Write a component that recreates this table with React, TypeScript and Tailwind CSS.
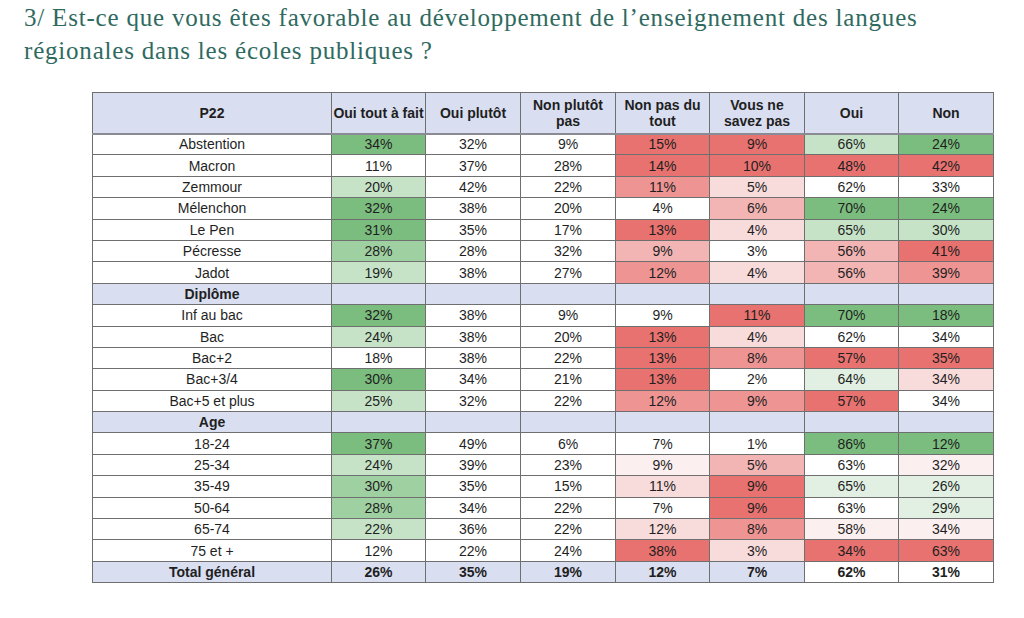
const shade: Record<string, string> = {
  w: 'bg-white',
  g3: 'bg-[#7bbd7e]',
  g2: 'bg-[#9fd0a2]',
  g1: 'bg-[#c6e3c8]',
  g0: 'bg-[#e1f0e2]',
  r3: 'bg-[#e8726f]',
  r2: 'bg-[#ee9594]',
  r1: 'bg-[#f2b5b4]',
  r0: 'bg-[#f8dbdb]',
  rx: 'bg-[#fcefef]',
};

type Row = { label: string; cells: [string, string][] };

const groups: { title?: string; rows: Row[] }[] = [
  {
    rows: [
      { label: 'Abstention', cells: [['34%', 'g3'], ['32%', 'w'], ['9%', 'w'], ['15%', 'r3'], ['9%', 'r3'], ['66%', 'g1'], ['24%', 'g3']] },
      { label: 'Macron', cells: [['11%', 'w'], ['37%', 'w'], ['28%', 'w'], ['14%', 'r3'], ['10%', 'r3'], ['48%', 'r3'], ['42%', 'r3']] },
      { label: 'Zemmour', cells: [['20%', 'g1'], ['42%', 'w'], ['22%', 'w'], ['11%', 'r2'], ['5%', 'r0'], ['62%', 'w'], ['33%', 'w']] },
      { label: 'Mélenchon', cells: [['32%', 'g3'], ['38%', 'w'], ['20%', 'w'], ['4%', 'w'], ['6%', 'r1'], ['70%', 'g3'], ['24%', 'g3']] },
      { label: 'Le Pen', cells: [['31%', 'g3'], ['35%', 'w'], ['17%', 'w'], ['13%', 'r3'], ['4%', 'r0'], ['65%', 'g1'], ['30%', 'g1']] },
      { label: 'Pécresse', cells: [['28%', 'g2'], ['28%', 'w'], ['32%', 'w'], ['9%', 'r1'], ['3%', 'w'], ['56%', 'r1'], ['41%', 'r3']] },
      { label: 'Jadot', cells: [['19%', 'g1'], ['38%', 'w'], ['27%', 'w'], ['12%', 'r2'], ['4%', 'r0'], ['56%', 'r1'], ['39%', 'r2']] },
    ],
  },
  {
    title: 'Diplôme',
    rows: [
      { label: 'Inf au bac', cells: [['32%', 'g3'], ['38%', 'w'], ['9%', 'w'], ['9%', 'w'], ['11%', 'r3'], ['70%', 'g3'], ['18%', 'g3']] },
      { label: 'Bac', cells: [['24%', 'g1'], ['38%', 'w'], ['20%', 'w'], ['13%', 'r3'], ['4%', 'r0'], ['62%', 'w'], ['34%', 'w']] },
      { label: 'Bac+2', cells: [['18%', 'w'], ['38%', 'w'], ['22%', 'w'], ['13%', 'r3'], ['8%', 'r2'], ['57%', 'r3'], ['35%', 'r3']] },
      { label: 'Bac+3/4', cells: [['30%', 'g3'], ['34%', 'w'], ['21%', 'w'], ['13%', 'r3'], ['2%', 'w'], ['64%', 'g0'], ['34%', 'r0']] },
      { label: 'Bac+5 et plus', cells: [['25%', 'g1'], ['32%', 'w'], ['22%', 'w'], ['12%', 'r2'], ['9%', 'r2'], ['57%', 'r3'], ['34%', 'w']] },
    ],
  },
  {
    title: 'Age',
    rows: [
      { label: '18-24', cells: [['37%', 'g3'], ['49%', 'w'], ['6%', 'w'], ['7%', 'w'], ['1%', 'w'], ['86%', 'g3'], ['12%', 'g3']] },
      { label: '25-34', cells: [['24%', 'g1'], ['39%', 'w'], ['23%', 'w'], ['9%', 'rx'], ['5%', 'r1'], ['63%', 'w'], ['32%', 'rx']] },
      { label: '35-49', cells: [['30%', 'g2'], ['35%', 'w'], ['15%', 'w'], ['11%', 'r0'], ['9%', 'r3'], ['65%', 'g0'], ['26%', 'g0']] },
      { label: '50-64', cells: [['28%', 'g2'], ['34%', 'w'], ['22%', 'w'], ['7%', 'w'], ['9%', 'r3'], ['63%', 'w'], ['29%', 'g0']] },
      { label: '65-74', cells: [['22%', 'g1'], ['36%', 'w'], ['22%', 'w'], ['12%', 'r0'], ['8%', 'r2'], ['58%', 'rx'], ['34%', 'rx']] },
      { label: '75 et +', cells: [['12%', 'w'], ['22%', 'w'], ['24%', 'w'], ['38%', 'r3'], ['3%', 'r0'], ['34%', 'r3'], ['63%', 'r3']] },
    ],
  },
];

const headers = ['Oui tout à fait', 'Oui plutôt', 'Non plutôt pas', 'Non pas du tout', 'Vous ne savez pas', 'Oui', 'Non'];
const totals = ['26%', '35%', '19%', '12%', '7%', '62%', '31%'];

const cell = 'border border-[#6f6f6f] text-center p-0 leading-none';
const head = 'border border-[#6f6f6f] border-b-2 border-b-[#8b8b96] text-center p-0 leading-[16px]';

export default function App() {
  return (
    <div className="min-h-screen bg-white font-['Liberation_Sans',Arial,sans-serif] text-[#1f1f1f]">
      <h1 className="pl-6 pt-[1px] font-['Liberation_Serif',serif] text-[25px] leading-[33px] tracking-[0.8px] text-[#2f6a61]">
        3/ Est-ce que vous êtes favorable au développement de l’enseignement des langues
        <br />
        régionales dans les écoles publiques ?
      </h1>

      <table className="ml-[92px] mt-[25px] table-fixed border-collapse text-[14px]">
        <colgroup>
          <col className="w-[239px]" />
          <col className="w-[94px]" />
          <col className="w-[95px]" />
          <col className="w-[95px]" />
          <col className="w-[94px]" />
          <col className="w-[95px]" />
          <col className="w-[94px]" />
          <col className="w-[95px]" />
        </colgroup>
        <thead>
          <tr className="h-[41px] bg-[#d9def0] font-bold">
            <th className={head}>P22</th>
            {headers.map((h, i) => (
              <th key={h} className={`${head} ${i === 0 ? 'whitespace-nowrap' : 'px-1'}`}>
                {h}
              </th>
            ))}
          </tr>
        </thead>
        <tbody>
          {groups.map((g, gi) => (
            <>
              {g.title && (
                <tr key={`t${gi}`} className="h-[21.4px] bg-[#d9def0] font-bold">
                  <td className={cell}>{g.title}</td>
                  {headers.map(h => (
                    <td key={h} className={cell}></td>
                  ))}
                </tr>
              )}
              {g.rows.map(r => (
                <tr key={r.label} className="h-[21.4px]">
                  <td className={`${cell} bg-white`}>{r.label}</td>
                  {r.cells.map(([v, s], i) => (
                    <td key={i} className={`${cell} ${shade[s]}`}>
                      {v}
                    </td>
                  ))}
                </tr>
              ))}
            </>
          ))}
          <tr className="h-[21.4px] font-bold">
            <td className={`${cell} bg-[#d9def0]`}>Total général</td>
            {totals.map((v, i) => (
              <td key={i} className={`${cell} ${i < 5 ? 'bg-[#d9def0]' : 'bg-white'}`}>
                {v}
              </td>
            ))}
          </tr>
        </tbody>
      </table>
    </div>
  );
}
